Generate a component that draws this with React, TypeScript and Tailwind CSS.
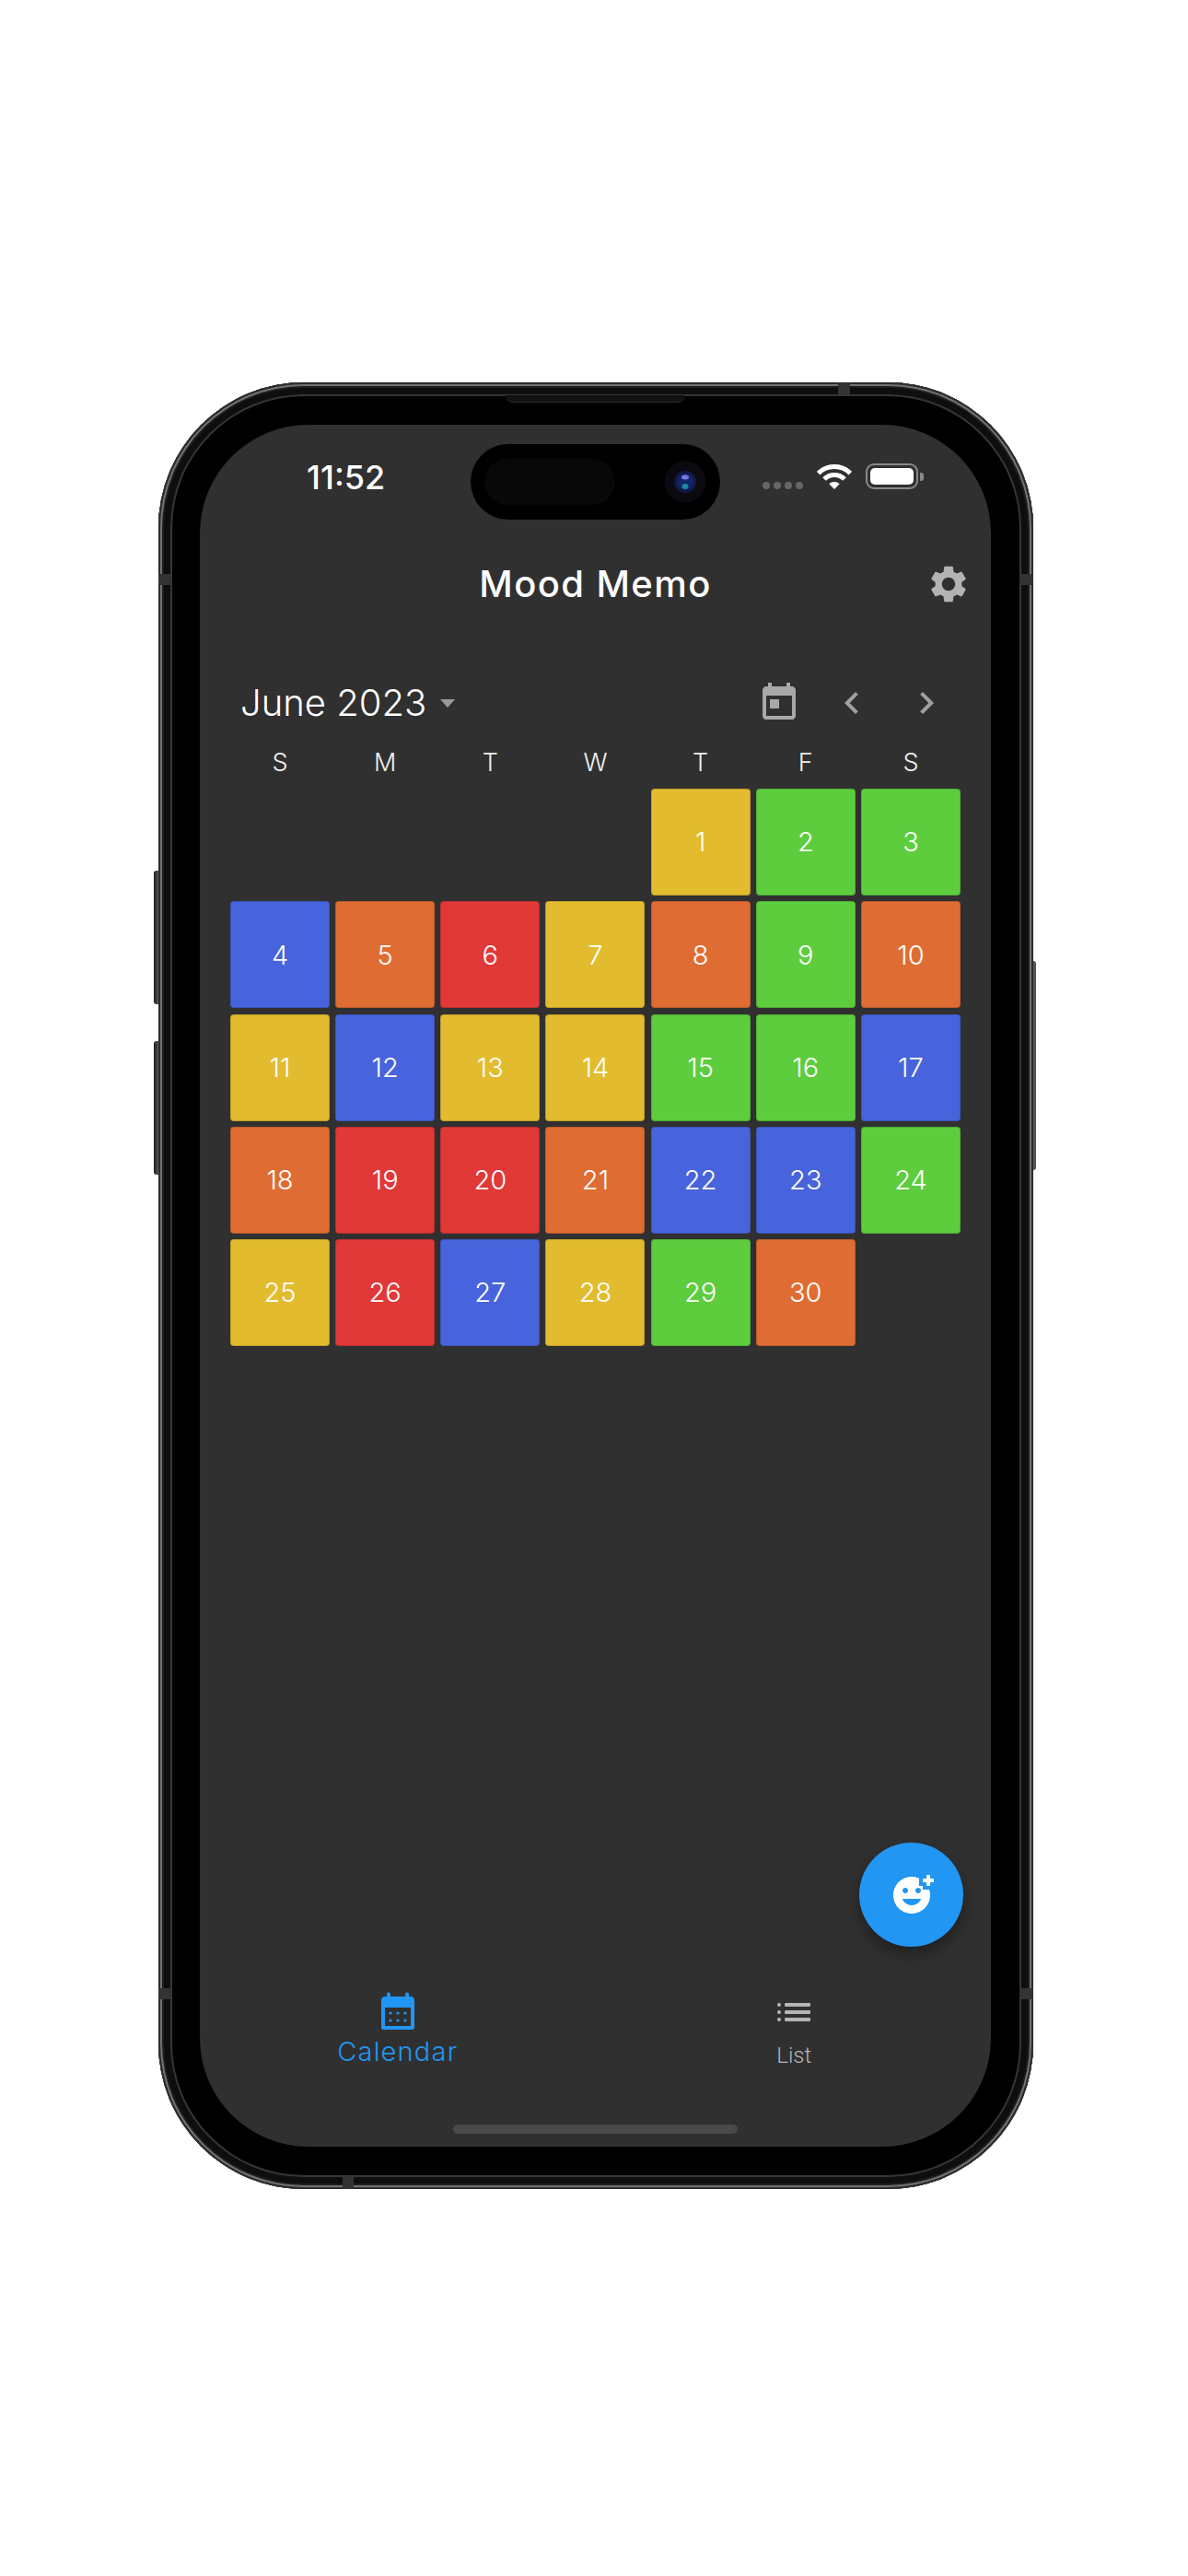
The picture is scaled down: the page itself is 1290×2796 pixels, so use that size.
const Y = "bg-[#e2bc2e]";
const G = "bg-[#5dcd3e]";
const B = "bg-[#4864dc]";
const O = "bg-[#df6d33]";
const R = "bg-[#e13838]";

const days: string[] = [
  Y, G, G,
  B, O, R, Y, O, G, O,
  Y, B, Y, Y, G, G, B,
  O, R, R, O, B, B, G,
  Y, R, B, Y, G, O,
];

const weekdays = ["S", "M", "T", "W", "T", "F", "S"];

function Wifi() {
  return (
    <svg width="38" height="29" viewBox="0 0 38 29" fill="none">
      <path d="M1.7 11.7A24.5 24.5 0 0 1 36.3 11.7" stroke="white" strokeWidth="5" />
      <path d="M8 18A15.5 15.5 0 0 1 30 18" stroke="white" strokeWidth="5" />
      <path d="M19 29L13.3 23.3A8 8 0 0 1 24.7 23.3Z" fill="white" />
    </svg>
  );
}

function Camera() {
  return (
    <svg width="46" height="46" viewBox="0 0 46 46">
      <circle cx="23" cy="23" r="22.5" fill="#0a0a10" />
      <circle cx="23" cy="23" r="12" fill="#101a44" />
      <circle cx="23" cy="23" r="9" fill="#14246a" />
      <ellipse cx="23" cy="18" rx="4" ry="2.5" fill="#7a78e0" />
      <ellipse cx="23" cy="28" rx="3.5" ry="3" fill="#1e8aa0" />
    </svg>
  );
}

export default function App() {
  return (
    <div className="min-h-[2796px] w-[1290px] bg-white pt-[415px] pl-[172px] font-['Inter',sans-serif]">
      <div className="relative h-[1961px] w-[950px] rounded-[158px] bg-black pt-[46px] pl-[45px] shadow-[inset_0_0_0_2px_#2c2c2c,inset_0_0_0_4px_#727272,inset_0_0_0_6px_#1e1e1e,inset_0_0_0_13px_#0e0e0e,inset_0_0_0_15px_#363636]">
        {/* side buttons */}
        <div className="absolute left-[-5px] top-[530px] h-[145px] w-[5px] rounded-l-[3px] bg-gradient-to-r from-[#1c1c1c] to-[#5a5a5a]" />
        <div className="absolute left-[-5px] top-[715px] h-[145px] w-[5px] rounded-l-[3px] bg-gradient-to-r from-[#1c1c1c] to-[#5a5a5a]" />
        <div className="absolute right-[-3px] top-[628px] h-[227px] w-[3px] rounded-r-[3px] bg-[#555555]" />
        {/* antenna bands */}
        <div className="absolute left-0 top-[208px] h-[12px] w-[14px] bg-[#333333]" />
        <div className="absolute right-0 top-[208px] h-[12px] w-[14px] bg-[#333333]" />
        <div className="absolute left-0 top-[1743px] h-[12px] w-[14px] bg-[#333333]" />
        <div className="absolute right-0 top-[1743px] h-[12px] w-[14px] bg-[#333333]" />
        <div className="absolute left-[738px] top-0 h-[14px] w-[13px] bg-[#333333]" />
        <div className="absolute bottom-0 left-[200px] h-[14px] w-[12px] bg-[#333333]" />
        {/* earpiece */}
        <div className="absolute left-[377px] top-[14px] h-[8px] w-[195px] rounded-b-[8px] border-b border-[#2c2c2c] bg-[#111111]" />

        <div className="flex h-[1869px] w-[859px] flex-col overflow-hidden rounded-[118px] bg-[#303030]">
          {/* status bar */}
          <div className="mt-[21px] flex h-[82px] items-center">
            <div className="ml-[116px] mb-[10px] w-[178px] text-[36px] leading-[44px] font-medium text-white">
              11:52
            </div>
            <div className="flex h-[82px] w-[271px] items-center rounded-[41px] bg-black pl-[15px]">
              <div className="h-[50px] w-[142px] rounded-[25px] bg-[#080808]" />
              <div className="ml-[53px]">
                <Camera />
              </div>
            </div>
            <div className="ml-[46px] flex gap-[4px] pt-[8px]">
              <div className="h-[8px] w-[8px] rounded-full bg-[#666666]" />
              <div className="h-[8px] w-[8px] rounded-full bg-[#666666]" />
              <div className="h-[8px] w-[8px] rounded-full bg-[#666666]" />
              <div className="h-[8px] w-[8px] rounded-full bg-[#666666]" />
            </div>
            <div className="ml-[15px] mb-[13px]">
              <Wifi />
            </div>
            <div className="ml-[15px] mb-[12px] flex items-center">
              <div className="h-[28px] w-[57px] rounded-[9px] border-2 border-[#8a8a8a] p-[3px]">
                <div className="h-full w-full rounded-[5px] bg-white" />
              </div>
              <div className="ml-[2px] h-[9px] w-[4px] rounded-r-[3px] bg-[#8a8a8a]" />
            </div>
          </div>

          {/* app bar */}
          <div className="mt-[46px] grid h-[48px] grid-cols-[1fr_auto_1fr] items-center">
            <div />
            <div className="text-[40px] leading-[48px] font-medium tracking-[1.4px] text-white">Mood Memo</div>
            <div className="flex justify-end pr-[22px]">
              <svg width="48" height="48" viewBox="0 0 24 24" fill="#b3b3b3">
                <path d="M19.14 12.94c.04-.3.06-.61.06-.94 0-.32-.02-.64-.07-.94l2.03-1.58c.18-.14.23-.41.12-.61l-1.92-3.32c-.12-.22-.37-.29-.59-.22l-2.39.96c-.5-.38-1.03-.7-1.62-.94l-.36-2.54c-.04-.24-.24-.41-.48-.41h-3.84c-.24 0-.43.17-.47.41l-.36 2.54c-.59.24-1.13.57-1.62.94l-2.39-.96c-.22-.08-.47 0-.59.22L2.74 8.87c-.12.21-.08.47.12.61l2.03 1.58c-.05.3-.09.63-.09.94s.02.64.07.94l-2.03 1.58c-.18.14-.23.41-.12.61l1.92 3.32c.12.22.37.29.59.22l2.39-.96c.5.38 1.03.7 1.62.94l.36 2.54c.05.24.24.41.48.41h3.84c.24 0 .44-.17.47-.41l.36-2.54c.59-.24 1.13-.56 1.62-.94l2.39.96c.22.08.47 0 .59-.22l1.92-3.32c.12-.22.07-.47-.12-.61l-2.01-1.58zM12 15.6c-1.98 0-3.6-1.62-3.6-3.6s1.62-3.6 3.6-3.6 3.6 1.62 3.6 3.6-1.62 3.6-3.6 3.6z" />
              </svg>
            </div>
          </div>

          {/* month header */}
          <div className="mt-[81px] flex h-[48px] items-center pl-[44px] pr-[46px]">
            <div className="text-[40px] leading-[48px] font-light text-white">June 2023</div>
            <svg className="ml-[15px]" width="16" height="9" viewBox="0 0 16 9" fill="#9a9a9a">
              <path d="M0 0H16L8 9Z" />
            </svg>
            <div className="ml-auto flex items-center">
              <svg className="mr-[31px]" width="48" height="48" viewBox="0 0 24 24" fill="#a8a8a8">
                <path d="M19 3h-1V1h-2v2H8V1H6v2H5c-1.11 0-1.99.9-1.99 2L3 19c0 1.1.89 2 2 2h14c1.1 0 2-.9 2-2V5c0-1.1-.9-2-2-2zm0 16H5V8h14v11zM7 10h5v5H7z" />
              </svg>
              <svg className="mr-[33px]" width="48" height="48" viewBox="0 0 24 24" fill="#a0a0a0">
                <path d="M15.41 7.41L14 6l-6 6 6 6 1.41-1.41L10.83 12z" />
              </svg>
              <svg width="48" height="48" viewBox="0 0 24 24" fill="#a0a0a0">
                <path d="M10 6L8.59 7.41 13.17 12l-4.58 4.59L10 18l6-6z" />
              </svg>
            </div>
          </div>

          {/* weekdays */}
          <div className="mt-[26px] ml-[33px] grid grid-cols-[repeat(7,108px)] gap-x-[6.17px]">
            {weekdays.map((d, i) => (
              <div key={i} className="text-center text-[27px] leading-[30px] font-light text-[#f0f0f0]">
                {d}
              </div>
            ))}
          </div>

          {/* days */}
          <div className="mt-[13px] ml-[33px] grid grid-cols-[repeat(7,108px)] auto-rows-[116px] gap-x-[6.17px] gap-y-[6.25px]">
            <div className="col-span-4" />
            {days.map((c, i) => (
              <div
                key={i}
                className={`flex items-center justify-center rounded-[4px] border border-black/15 text-[29px] font-light text-white ${c}`}
              >
                {i + 1}
              </div>
            ))}
          </div>

          {/* floating action button */}
          <div className="relative mt-auto">
            <div className="absolute bottom-[46px] right-[30px] flex h-[113px] w-[113px] items-center justify-center rounded-full bg-[#2196f3] shadow-[0_8px_16px_rgba(0,0,0,0.35)]">
              <svg width="48" height="48" viewBox="0 0 24 24" fill="white">
                <path d="M18,9V7h-2V2.84C14.77,2.3,13.42,2,11.99,2C6.47,2,2,6.48,2,12s4.47,10,9.99,10C17.52,22,22,17.52,22,12c0-1.05-0.17-2.05-0.47-3H18z M15.5,8C16.33,8,17,8.67,17,9.5S16.33,11,15.5,11S14,10.33,14,9.5S14.67,8,15.5,8z M8.5,8C9.33,8,10,8.67,10,9.5S9.33,11,8.5,11S7,10.33,7,9.5S7.67,8,8.5,8z M12,17.5c-2.33,0-4.31-1.46-5.11-3.5h10.22C16.31,16.04,14.33,17.5,12,17.5z M22,3h2v2h-2v2h-2V5h-2V3h2V1h2V3z" />
              </svg>
            </div>
          </div>

          {/* bottom nav */}
          <div className="flex h-[171px] flex-col">
            <div className="grid grid-cols-2">
              <div className="flex flex-col items-center">
                <svg width="48" height="48" viewBox="0 0 24 24" fill="#2196f3">
                  <path d="M19 4h-1V2.8a.9.9 0 0 0-2 0V4H8V2.8a.9.9 0 0 0-2 0V4H5C3.9 4 3.01 4.9 3.01 6L3 20.8c0 .7.5 1.2 1.2 1.2h15.6c.7 0 1.2-.5 1.2-1.2V6c0-1.1-.9-2-2-2zm0 16H5V10h14v10z" />
                  <circle cx="8" cy="13" r=".8" />
                  <circle cx="12" cy="13" r=".8" />
                  <circle cx="16" cy="13" r=".8" />
                  <circle cx="8" cy="17" r=".8" />
                  <circle cx="12" cy="17" r=".8" />
                  <circle cx="16" cy="17" r=".8" />
                </svg>
                <div className="mt-[2px] text-[29px] leading-[36px] font-light tracking-[1.2px] text-[#2196f3]">Calendar</div>
              </div>
              <div className="flex flex-col items-center pt-[1px] pl-[2px]">
                <svg width="48" height="48" viewBox="0 0 24 24" fill="#b5b5b5">
                  <circle cx="4" cy="8" r="1" />
                  <circle cx="4" cy="12" r="1" />
                  <circle cx="4" cy="16" r="1" />
                  <rect x="7" y="7" width="14" height="2" rx=".6" />
                  <rect x="7" y="11" width="14" height="2" rx=".6" />
                  <rect x="7" y="15" width="14" height="2" rx=".6" />
                </svg>
                <div className="mt-[8px] font-['Roboto',sans-serif] text-[24px] leading-[30px] font-light text-[#b5b5b5]">List</div>
              </div>
            </div>
            <div className="mx-auto mt-auto mb-[14px] h-[10px] w-[309px] rounded-[5px] bg-[#4a4a4a]" />
          </div>
        </div>
      </div>
    </div>
  );
}
